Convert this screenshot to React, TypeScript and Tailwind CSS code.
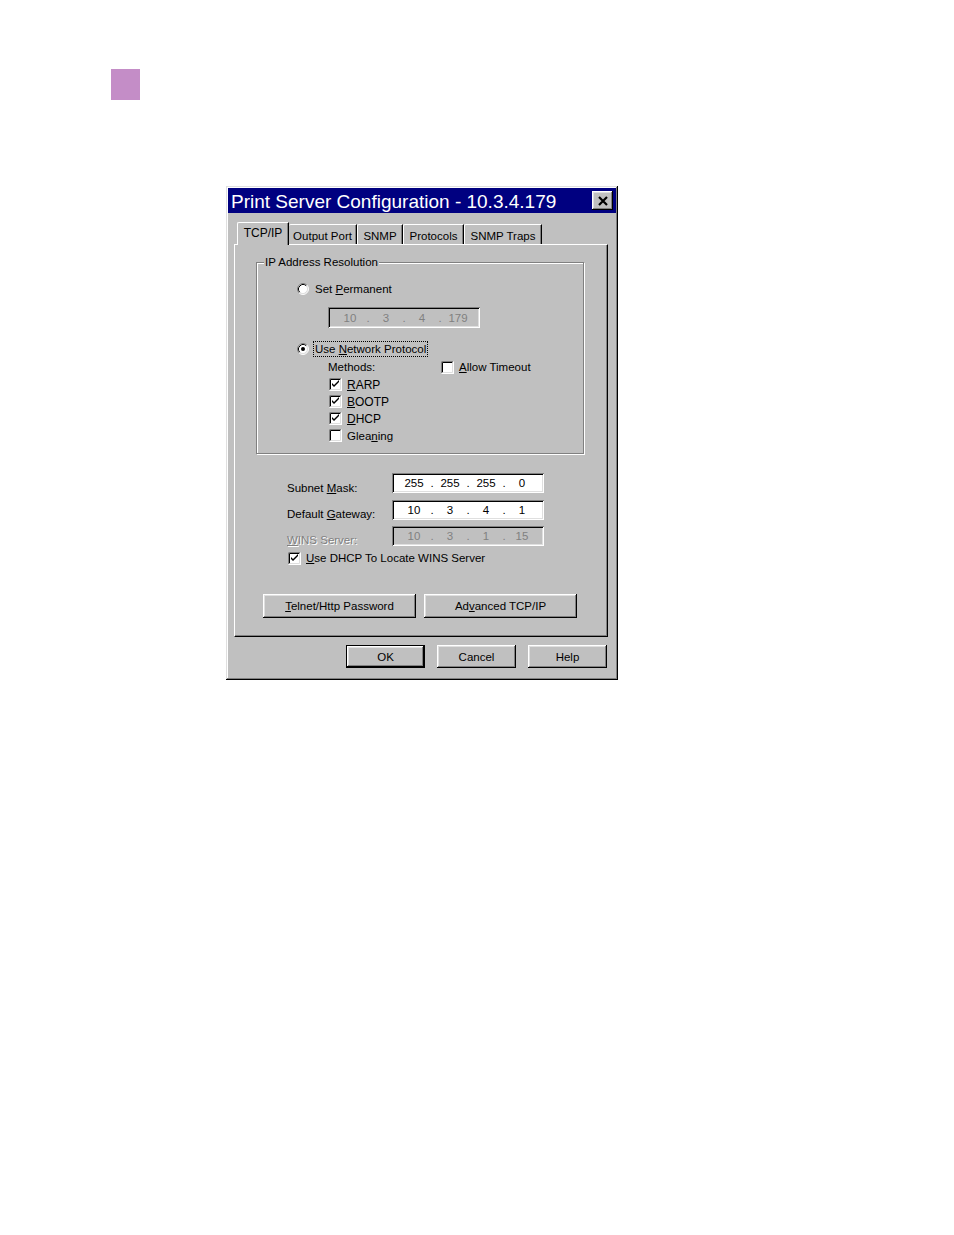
import React, { Fragment } from "react";

const raised =
  "shadow-[inset_-1px_-1px_0_#000,inset_1px_1px_0_#fff,inset_-2px_-2px_0_#808080,inset_2px_2px_0_#dfdfdf]";
const sunken =
  "shadow-[inset_1px_1px_0_#808080,inset_-1px_-1px_0_#fff,inset_2px_2px_0_#000,inset_-2px_-2px_0_#dfdfdf]";

function Radio({ checked }: { checked?: boolean }) {
  return (
    <svg width="12" height="12" viewBox="0 0 12 12" className="shrink-0">
      <circle cx="6" cy="6" r="5" fill="#fff" />
      <path d="M2.11 9.89 A5.5 5.5 0 0 1 9.89 2.11" fill="none" stroke="#808080" strokeWidth="1" />
      <path d="M9.89 2.11 A5.5 5.5 0 0 1 2.11 9.89" fill="none" stroke="#fff" strokeWidth="1" />
      <path d="M2.82 9.18 A4.5 4.5 0 0 1 9.18 2.82" fill="none" stroke="#000" strokeWidth="1" />
      <path d="M9.18 2.82 A4.5 4.5 0 0 1 2.82 9.18" fill="none" stroke="#dfdfdf" strokeWidth="1" />
      {checked && <circle cx="6" cy="6" r="2" fill="#000" />}
    </svg>
  );
}

function Check({ checked }: { checked?: boolean }) {
  return (
    <svg width="13" height="13" viewBox="0 0 13 13" className="shrink-0">
      <rect x="0" y="0" width="13" height="13" fill="#fff" />
      <path d="M0.5 12.5 V0.5 H12.5" fill="none" stroke="#808080" />
      <path d="M1.5 11.5 V1.5 H11.5" fill="none" stroke="#000" />
      <path d="M0.5 12.5 H12.5 V0.5" fill="none" stroke="#fff" />
      <path d="M1.5 11.5 H11.5 V1.5" fill="none" stroke="#dfdfdf" />
      {checked && <path d="M3 5 L3 7 L5 9 L10 4 L10 2 L5 7 Z" fill="#000" />}
    </svg>
  );
}

function IpField({ parts, disabled, h }: { parts: string[]; disabled?: boolean; h?: string }) {
  return (
    <div
      className={`w-[152px] ${h ?? "h-[20px]"} flex items-center pl-[8px] ${
        disabled ? "bg-[#c0c0c0] text-[#808080]" : "bg-white text-black"
      } ${sunken}`}
    >
      {parts.map((p, i) => (
        <Fragment key={i}>
          <span className="w-[28px] text-center leading-[14px]">{p}</span>
          {i < 3 && <span className="w-[8px] text-center leading-[14px]">.</span>}
        </Fragment>
      ))}
    </div>
  );
}

function Btn({ children, w, def }: { children: React.ReactNode; w: string; def?: boolean }) {
  if (def) {
    return (
      <div className={`${w} h-[23px] border border-black`}>
        <div className={`w-full h-full flex items-center justify-center bg-[#c0c0c0] ${raised}`}>
          {children}
        </div>
      </div>
    );
  }
  return (
    <div className={`${w} flex items-center justify-center bg-[#c0c0c0] ${raised}`}>{children}</div>
  );
}

export default function App() {
  return (
    <div className="w-[954px] h-[1235px] bg-white overflow-hidden font-['Liberation_Sans',Arial,sans-serif] text-[11.5px] text-black leading-[14px]">
      <div className="pt-[69px] pl-[111px]">
        <div className="w-[29px] h-[31px] bg-[#c48dc7]" />
      </div>

      <div className="ml-[226px] mt-[86px] w-[392px] h-[494px] bg-[#c0c0c0] p-[2px] shadow-[inset_-1px_-1px_0_#000,inset_1px_1px_0_#dfdfdf,inset_-2px_-2px_0_#808080,inset_2px_2px_0_#fff]">
        {/* Title bar */}
        <div className="h-[25px] bg-[#000080] flex items-center justify-between pl-[3px] pr-[3px]">
          <span className="text-white text-[19px] leading-[22px] pt-[3px]">
            Print Server Configuration - 10.3.4.179
          </span>
          <div className={`w-[21px] h-[19px] bg-[#c0c0c0] flex items-center justify-center ${raised}`}>
            <svg width="12" height="10" viewBox="0 0 12 10">
              <path d="M2 1 L10 9 M10 1 L2 9" stroke="#000" strokeWidth="2.2" />
            </svg>
          </div>
        </div>

        {/* Tabs */}
        <div className="mt-[9px] ml-[9px] h-[22px] flex items-end relative z-10">
          <div className="w-[52px] h-[23px] -mb-px bg-[#c0c0c0] border-l border-t border-white rounded-tl-[2px] border-r border-r-black shadow-[inset_-1px_0_0_#808080] flex items-start justify-center pt-[3px] text-[12px]">
            TCP/IP
          </div>
          <div className="w-[68px] h-[20px] border-t border-white border-r border-r-black shadow-[inset_-1px_0_0_#808080] rounded-tl-[2px] flex items-start justify-center pt-[4px]">
            Output Port
          </div>
          <div className="w-[46px] h-[20px] border-t border-l border-white border-r border-r-black shadow-[inset_-1px_0_0_#808080] rounded-tl-[2px] flex items-start justify-center pt-[4px]">
            SNMP
          </div>
          <div className="w-[61px] h-[20px] border-t border-l border-white border-r border-r-black shadow-[inset_-1px_0_0_#808080] rounded-tl-[2px] flex items-start justify-center pt-[4px]">
            Protocols
          </div>
          <div className="w-[78px] h-[20px] border-t border-l border-white border-r border-r-black shadow-[inset_-1px_0_0_#808080] rounded-tl-[2px] flex items-start justify-center pt-[4px]">
            SNMP Traps
          </div>
        </div>

        {/* Panel */}
        <div className="ml-[6px] w-[374px] h-[393px] border-l border-t border-white border-r border-b border-r-black border-b-black shadow-[inset_-1px_-1px_0_#808080]">
          {/* Group box */}
          <div className="relative mt-[17px] ml-[21px] w-[328px] h-[192px] border border-[#808080] shadow-[inset_1px_1px_0_#fff,1px_1px_0_#fff]">
            <span className="absolute -top-[8px] left-[7px] bg-[#c0c0c0] px-[1px]">IP Address Resolution</span>

            <div className="mt-[19px] ml-[40px] h-[14px] flex items-center">
              <Radio />
              <span className="ml-[6px]">
                Set <u>P</u>ermanent
              </span>
            </div>

            <div className="mt-[11px] ml-[71px]">
              <IpField parts={["10", "3", "4", "179"]} disabled h="h-[21px]" />
            </div>

            <div className="mt-[13px] ml-[40px] h-[16px] flex items-center">
              <Radio checked />
              <span className="ml-[4px] px-[1px] border border-dotted border-black leading-[14px]">
                Use <u>N</u>etwork Protocol
              </span>
            </div>

            <div className="mt-[3px] ml-[71px] h-[14px] flex items-center">
              <span className="w-[113px]">Methods:</span>
              <Check />
              <span className="ml-[5px]">
                <u>A</u>llow Timeout
              </span>
            </div>

            <div className="mt-[2px] ml-[72px] flex flex-col">
              <div className="h-[17px] flex items-center">
                <Check checked />
                <span className="ml-[5px] text-[12px]">
                  <u>R</u>ARP
                </span>
              </div>
              <div className="h-[17px] flex items-center">
                <Check checked />
                <span className="ml-[5px] text-[12px]">
                  <u>B</u>OOTP
                </span>
              </div>
              <div className="h-[17px] flex items-center">
                <Check checked />
                <span className="ml-[5px] text-[12px]">
                  <u>D</u>HCP
                </span>
              </div>
              <div className="h-[17px] flex items-center">
                <Check />
                <span className="ml-[5px]">
                  Glea<u>n</u>ing
                </span>
              </div>
            </div>
          </div>

          {/* Address fields */}
          <div className="mt-[19px] ml-[52px] flex flex-col gap-[6px]">
            <div className="flex items-start h-[20px]">
              <span className="w-[105px] pt-[8px]">
                Subnet <u>M</u>ask:
              </span>
              <IpField parts={["255", "255", "255", "0"]} />
            </div>
            <div className="flex items-start h-[20px] mt-[1px]">
              <span className="w-[105px] pt-[7px]">
                Default <u>G</u>ateway:
              </span>
              <IpField parts={["10", "3", "4", "1"]} />
            </div>
            <div className="flex items-start h-[20px]">
              <span className="w-[105px] pt-[7px] text-[#808080] [text-shadow:1px_1px_0_#fff]">
                <u>W</u>INS Server:
              </span>
              <IpField parts={["10", "3", "1", "15"]} disabled />
            </div>
          </div>

          <div className="mt-[5px] ml-[53px] h-[14px] flex items-center">
            <Check checked />
            <span className="ml-[5px]">
              <u>U</u>se DHCP To Locate WINS Server
            </span>
          </div>

          <div className="mt-[29px] ml-[28px] flex gap-[8px] h-[24px]">
            <Btn w="w-[153px]">
              <span>
                <u>T</u>elnet/Http Password
              </span>
            </Btn>
            <Btn w="w-[153px]">
              <span>
                Ad<u>v</u>anced TCP/IP
              </span>
            </Btn>
          </div>
        </div>

        {/* Bottom buttons */}
        <div className="mt-[8px] pr-[9px] flex justify-end gap-[12px] h-[23px]">
          <Btn w="w-[79px]" def>
            OK
          </Btn>
          <Btn w="w-[79px]">Cancel</Btn>
          <Btn w="w-[79px]">Help</Btn>
        </div>
      </div>
    </div>
  );
}
